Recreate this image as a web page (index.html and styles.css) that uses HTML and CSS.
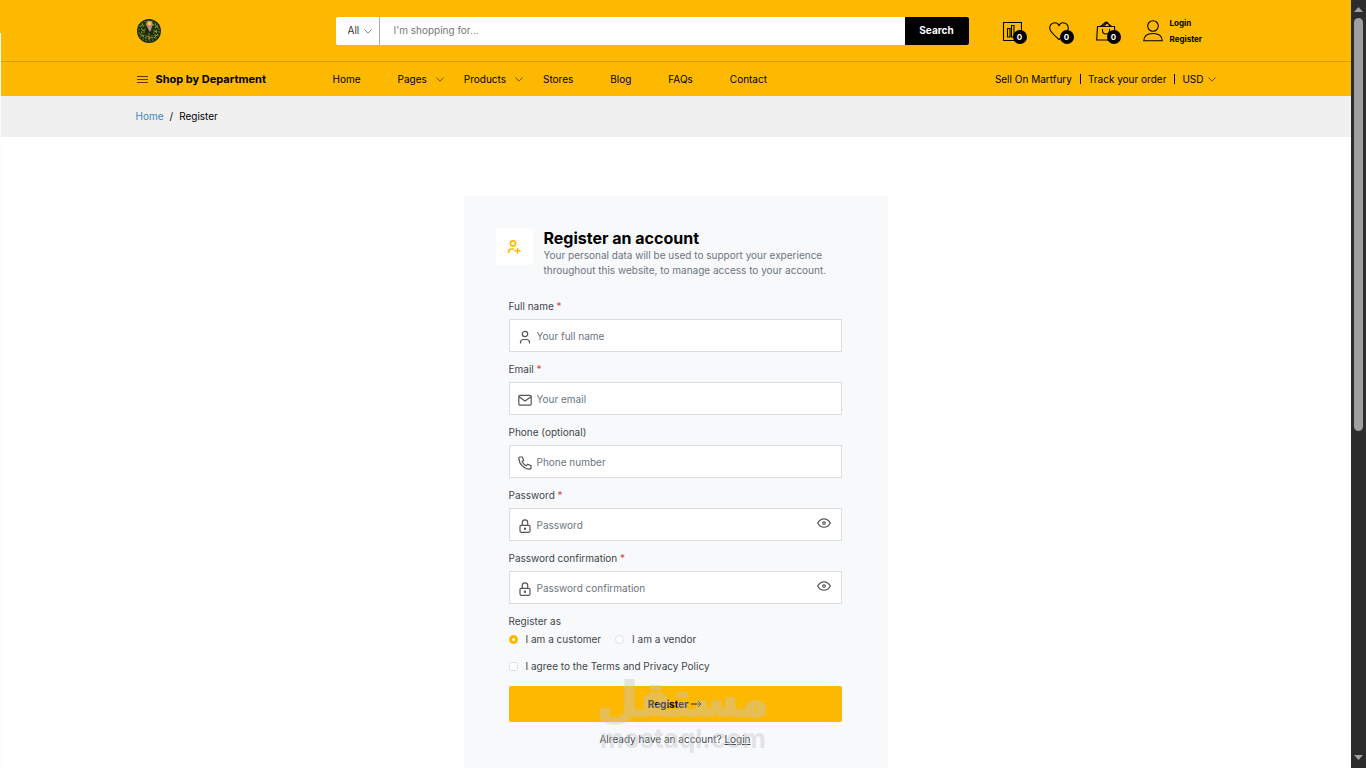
FILE: index.html
```html
<!DOCTYPE html>
<html lang="en">
<head>
<meta charset="utf-8">
<title>Register an account</title>
<link rel="stylesheet" href="styles.css">
</head>
<body>
<svg class="defs" aria-hidden="true">
  <symbol id="chevron" viewBox="0 0 8 5"><path d="M.5.5 4 4.200 7.500.5" fill="none" stroke="currentColor" stroke-width=".8"/></symbol>
  <symbol id="user" viewBox="0 0 14 14"><circle cx="7" cy="4" r="2.700"/><path d="M2.500 13.500v-1a3 3 0 0 1 3-3h3a3 3 0 0 1 3 3v1"/></symbol>
  <symbol id="mail" viewBox="0 0 14 14"><rect x=".8" y="2.300" width="12.400" height="9.800" rx="1.200"/><path d="m1 3.800 6 4.200 6-4.200"/></symbol>
  <symbol id="phone" viewBox="0 0 14 14"><path d="M2 1h2.300l1.400 3.300-1.600 1.200a8 8 0 0 0 4.300 4.300l1.300-1.600L13 9.600V12a1.200 1.200 0 0 1-1.200 1.200C6 13 1 8 .8 2.200A1.200 1.200 0 0 1 2 1z"/></symbol>
  <symbol id="lock" viewBox="0 0 14 14"><rect x="2" y="6.300" width="10" height="7" rx="1.200"/><path d="M4.300 6.300V3.500a2.700 2.700 0 0 1 5.400 0v2.800"/><circle cx="7" cy="9.800" r=".6"/></symbol>
  <symbol id="eye" viewBox="0 0 14 10"><path d="M.7 5C3.700-.6 10.300-.6 13.300 5c-3 5.600-9.600 5.600-12.600 0z"/><circle cx="7" cy="5" r="1.500" fill="#888" stroke="#888"/></symbol>
</svg>
<div class="page">
  <header class="header">
    <div class="container topbar">
      <a class="logo" href="#" aria-label="Home page">
        <svg viewBox="0 0 24 24" width="24" height="24">
          <circle cx="12" cy="12" r="12" fill="#1c2a0c"/>
          <g fill="none" stroke-width="1.500" stroke-dasharray="2 1.500">
            <circle cx="12" cy="12" r="10" stroke="#4d6d12"/>
            <circle cx="12" cy="12" r="7.500" stroke="#6d8a1c"/>
            <circle cx="12" cy="13" r="5" stroke="#4b5d18"/>
          </g>
          <path d="M3 8l3-3M18 5l3 4M3 15l4 3M17 19l4-4M5 11l3 1M17 12l3 1" stroke="#91a329"/>
          <path d="M10 2h5l1 4-2 3h-3L9 6z" fill="#c98e3c"/>
          <path d="M11.500 6h2.500l.5 4-1.500 3-2-3z" fill="#b98a95"/>
          <circle cx="12.500" cy="4.500" r="1.800" fill="#f0c98e"/>
          <path d="M12 14v7M9 17l6 2" stroke="#9a7b35"/>
        </svg>
      </a>
      <form class="search" role="search">
        <div class="category">
          <select aria-label="Category"><option>All</option></select>
          <svg class="chev"><use href="#chevron"/></svg>
        </div>
        <input class="query" type="search" placeholder="I'm shopping for..." aria-label="Search products">
        <button class="search-btn" type="button">Search</button>
      </form>
      <div class="actions">
        <a class="action" href="#" aria-label="Compare">
          <svg viewBox="0 0 20 20" width="20" height="20"><path d="M1.500 1.500h18v18h-18zM5.500 7.500H8V16H5.500zM9.500 4.500H12V16H9.500z"/></svg><span class="badge">0</span></a>
        <a class="action" href="#" aria-label="Wishlist">
          <svg viewBox="0 0 20 20" width="20" height="20"><path d="M10 4.500C8 .3 1 1 .7 7 .6 11 6 14.500 10 18.500c4-4 9.400-7.500 9.300-11.500C19 1 12 .3 10 4.500z"/></svg><span class="badge">0</span></a>
        <a class="action" href="#" aria-label="Cart">
          <svg viewBox="0 0 20 20" width="20" height="20"><path d="M1.500 5.500h17l.8 13.500H.7zM4.500 5.500 10 1l5.500 4.500M7 5.500 11.500 1.500 14 5.500M6.500 8v1.500a3.500 3.500 0 0 0 7 0V8"/></svg><span class="badge">0</span></a>
        <div class="account">
          <svg viewBox="0 0 20 22" width="20" height="22"><circle cx="10" cy="6" r="5.300"/><path d="M.8 20.800C.8 16 4 13.500 10 13.500s9.200 2.500 9.200 7.300z"/></svg>
          <div class="account-links"><a href="#">Login</a><a href="#">Register</a></div>
        </div>
      </div>
    </div>
    <div class="rule"></div>
    <div class="container navbar">
      <button class="department" type="button">
        <svg viewBox="0 0 12 10" width="12" height="10"><path d="M1 2.500h11M1 5.500h11M1 8.500h11" stroke="#5b3a00"/></svg>
        Shop by Department</button>
      <nav class="menu">
        <a href="#">Home</a>
        <a class="has-sub" href="#">Pages <svg class="chev"><use href="#chevron"/></svg></a>
        <a class="has-sub" href="#">Products <svg class="chev"><use href="#chevron"/></svg></a>
        <a href="#">Stores</a>
        <a href="#">Blog</a>
        <a href="#">FAQs</a>
        <a href="#">Contact</a>
      </nav>
      <div class="tools">
        <a href="#">Sell On Martfury</a>
        <a href="#">Track your order</a>
        <button class="currency" type="button">USD <svg class="chev"><use href="#chevron"/></svg></button>
      </div>
    </div>
  </header>
  <nav class="crumbs" aria-label="Breadcrumb">
    <div class="container crumb-list"><a href="#">Home</a><span>/</span><span>Register</span></div>
  </nav>
  <main class="main">
    <section class="card">
      <div class="card-head">
        <div class="card-icon"><svg class="line" viewBox="0 0 14 14" width="14" height="14"><circle cx="6" cy="3.500" r="2.600"/><path d="M1.500 13v-1a3 3 0 0 1 3-3H7M10.500 8v5.500M7.500 10.800h6"/></svg></div>
        <div>
          <h1>Register an account</h1>
          <p>Your personal data will be used to support your experience throughout this website, to manage access to your account.</p>
        </div>
      </div>
      <form class="form">
        <div class="field">
          <label for="name">Full name <i>*</i></label>
          <div class="box"><svg class="line lead"><use href="#user"/></svg><input id="name" type="text" placeholder="Your full name"></div>
        </div>
        <div class="field">
          <label for="email">Email <i>*</i></label>
          <div class="box"><svg class="line lead"><use href="#mail"/></svg><input id="email" type="email" placeholder="Your email"></div>
        </div>
        <div class="field">
          <label for="phone-number">Phone (optional)</label>
          <div class="box"><svg class="line lead"><use href="#phone"/></svg><input id="phone-number" type="tel" placeholder="Phone number"></div>
        </div>
        <div class="field">
          <label for="password">Password <i>*</i></label>
          <div class="box"><svg class="line lead"><use href="#lock"/></svg><input id="password" type="password" placeholder="Password"><button class="reveal" type="button" aria-label="Show password"><svg class="line"><use href="#eye"/></svg></button></div>
        </div>
        <div class="field">
          <label for="confirm">Password confirmation <i>*</i></label>
          <div class="box"><svg class="line lead"><use href="#lock"/></svg><input id="confirm" type="password" placeholder="Password confirmation"><button class="reveal" type="button" aria-label="Show password confirmation"><svg class="line"><use href="#eye"/></svg></button></div>
        </div>
        <fieldset class="roles">
          <legend>Register as</legend>
          <div class="role-list">
            <label><input type="radio" name="role" checked>I am a customer</label>
            <label><input type="radio" name="role">I am a vendor</label>
          </div>
        </fieldset>
        <label class="agree"><input type="checkbox">I agree to the Terms and Privacy Policy</label>
        <button class="submit" type="submit">Register <svg viewBox="0 0 11 8" width="11" height="8"><path d="M0 4h10M7 1l3 3-3 3" fill="none" stroke="#222"/></svg></button>
        <p class="signin">Already have an account? <a href="#">Login</a></p>
      </form>
    </section>
  </main>
</div>
<div class="scrollbar" aria-hidden="true">
  <svg viewBox="0 0 9 5" width="9" height="5"><path d="M0 5 4.500 0 9 5z"/></svg>
  <div class="track"><div class="thumb"></div></div>
  <svg viewBox="0 0 9 5" width="9" height="5"><path d="M0 0 4.500 5 9 0z"/></svg>
</div>
<div class="watermark"><span class="mark-ar" lang="ar" dir="rtl">مستقل</span><span class="mark-en">mostaql.com</span></div>
</body>
</html>
```
FILE: styles.css
```css
* { box-sizing: border-box; }
body {
  margin: 0;
  height: 100vh;
  display: flex;
  overflow: hidden;
  background: #fff;
  color: #000;
  font: 10px/15px Inter, "Open Sans", sans-serif;
}
a { color: inherit; text-decoration: none; }
button, input, select { font: inherit; color: inherit; margin: 0; padding: 0; border: 0; background: none; }
h1, p { margin: 0; }
.defs { position: absolute; width: 0; height: 0; }
.page { position: relative; flex: 1; height: 100vh; overflow: hidden; }
.page::before { content: ""; position: absolute; left: 0; top: 33px; bottom: 0; width: 1px; background: #fdfaf8; }
.container { max-width: 1080px; margin: 0 auto; }
.chev { width: 8px; height: 5px; flex: none; }
.line { fill: none; stroke: currentColor; stroke-width: 1.2; }

.header { background: #fdb800; }
.topbar { height: 61px; display: flex; align-items: center; }
.logo { width: 200px; padding-left: 1px; display: flex; }
.search { display: flex; flex: 1; max-width: 633px; height: 28px; background: #fff; border-radius: 2px; overflow: hidden; }
.category { position: relative; width: 44px; border-right: 1px solid #aaa; color: #333; }
.category select { appearance: none; width: 100%; height: 100%; padding-left: 12px; }
.category .chev { position: absolute; right: 7px; top: 12px; pointer-events: none; color: #4a6680; }
.query { flex: 1; min-width: 0; padding: 0 14px; outline: 0; }
.query::placeholder { color: #777; opacity: 1; }
.search-btn { width: 64px; background: #000; color: #fff; font-weight: 700; }
.actions { display: flex; align-items: center; gap: 27px; margin-left: 33px; }
.action { position: relative; display: flex; }
.actions svg { fill: none; stroke: #000; stroke-width: 1.1; }
.badge {
  position: absolute; left: 11px; top: 9px; width: 14px; height: 14px;
  border-radius: 50%; background: #000; color: #fff;
  font-size: 8px; line-height: 14px; font-weight: 700; text-align: center;
}
.account { display: flex; align-items: center; gap: 7px; }
.account-links { display: flex; flex-direction: column; font-size: 8px; line-height: 16px; font-weight: 700; }

.rule { height: 1px; background: #d99e00; }
.navbar { height: 34px; display: flex; align-items: center; }
.department { width: 197px; display: flex; align-items: center; gap: 8px; font-size: 11px; font-weight: 700; }
.menu { display: flex; flex: 1; gap: 37px; }
.has-sub { display: flex; align-items: center; gap: 9px; margin-right: -17px; }
.menu .chev, .currency .chev { color: #5b3a00; }
.tools { display: flex; align-items: center; line-height: 10px; }
.tools > * + * { border-left: 1px solid #000; margin-left: 8px; padding-left: 7px; }
.currency { display: flex; align-items: center; gap: 4px; }

.crumbs { background: #f0f0f0; }
.crumb-list { height: 41px; display: flex; align-items: center; gap: 6px; }
.crumb-list a { color: #3d87c2; }

.main { padding-top: 59px; display: flex; justify-content: center; }
.card { width: 424px; min-height: 620px; padding: 32px; background: #f8f9fb; border-radius: 4px; color: #40454a; }
.card-head { display: flex; gap: 11px; height: 71px; }
.card-icon { width: 37px; height: 37px; flex: none; display: grid; place-items: center; background: #fff; border-radius: 3px; color: #fdb800; }
.card-icon .line { stroke-width: 1.6; }
.card h1 { font-size: 16px; line-height: 20px; font-weight: 700; color: #000; }
.card-head p { color: #6c757d; }
.form { padding: 0 14px 0 13px; }
.field { margin-bottom: 10px; }
.field label { display: block; margin-bottom: 5px; }
.field i { color: #e2403a; font-style: normal; }
.box { display: flex; align-items: center; height: 33px; padding: 0 10px 0 8px; background: #fff; border: 1px solid #dcdddf; color: #555; }
.box input { flex: 1; min-width: 0; height: 100%; padding-left: 5px; outline: 0; }
.box input::placeholder { color: #6c757d; opacity: 1; }
.lead { width: 14px; height: 14px; flex: none; margin-top: 2px; }
.reveal { display: flex; padding-bottom: 4px; }
.reveal svg { width: 14px; height: 10px; }
.roles { margin: 0; padding: 0; border: 0; min-width: 0; }
.roles legend { padding: 0; }
.role-list { display: flex; gap: 14px; padding-top: 3px; }
.role-list label, .agree { display: flex; align-items: center; gap: 8px; }
.role-list input { appearance: none; width: 9px; height: 9px; border: 1px solid #dee2e6; border-radius: 50%; background: #fff; }
.role-list input:checked { border: 3px solid #fdb800; }
.agree { margin: 12px 0; }
.agree input { appearance: none; width: 9px; height: 9px; border: 1px solid #dee2e6; border-radius: 2px; background: #fff; }
.submit { width: 100%; height: 36px; display: flex; align-items: center; justify-content: center; gap: 3px; background: #fdb800; border-radius: 2px; color: #000; font-weight: 700; }
.signin { margin-top: 10px; text-align: center; }
.signin a { text-decoration: underline; }

.scrollbar { width: 15px; height: 100vh; padding: 7px 0 8px; display: flex; flex-direction: column; align-items: center; background: #2c2c2c; fill: #9f9f9f; }
.track { flex: 1; width: 9px; padding-top: 6px; }
.thumb { height: 56%; background: #9f9f9f; border-radius: 5px; }

.watermark {
  position: fixed; left: 50%; bottom: 15px; transform: translateX(-50%);
  display: flex; flex-direction: column; align-items: center;
  color: #c5c5c5; opacity: .42; pointer-events: none; font-weight: 700;
}
.mark-ar { font-family: "DejaVu Sans", sans-serif; font-size: 47px; line-height: 50px; -webkit-text-stroke: 2px #c5c5c5; }
.mark-en { font-size: 26px; line-height: 28px; }
```
